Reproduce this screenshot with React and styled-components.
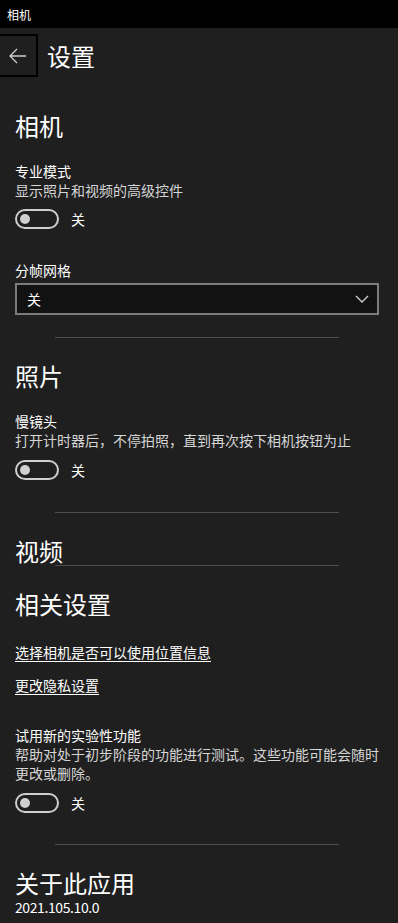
import React, { useState } from "react"
import styled, { createGlobalStyle } from "styled-components"

const GlobalStyle = createGlobalStyle`
  html, body {
    margin: 0;
    padding: 0;
    background: #1f1f1f;
  }
  * {
    box-sizing: border-box;
  }
`

const font = `"Noto Sans CJK SC", "Noto Sans", sans-serif`

const Page = styled.div`
  width: 398px;
  min-height: 923px;
  background: #1f1f1f;
  color: #fff;
  font-family: ${font};
  overflow: hidden;
`

const TitleBar = styled.div`
  height: 28px;
  background: #000;
  display: flex;
  align-items: center;
  padding-left: 7px;
  font-size: 12px;
  color: #fff;
`

const Header = styled.header`
  display: flex;
  align-items: center;
  margin-top: 6px;
  height: 43px;
`

const BackButton = styled.button`
  width: 38px;
  height: 43px;
  border: 2px solid #000;
  border-left: none;
  background: transparent;
  display: flex;
  align-items: center;
  justify-content: center;
  padding: 0;
  margin: 0;
  color: #d0d0d0;
`

const PageTitle = styled.h1`
  margin: 0 0 0 9px;
  font-size: 24px;
  font-weight: 400;
  line-height: 28px;
`

const Content = styled.main`
  padding: 0 19px 0 15px;
`

const Heading = styled.h2`
  margin: ${(p) => p.$top}px 0 0;
  font-size: 24px;
  font-weight: 400;
  line-height: 28px;
`

const Label = styled.div`
  margin-top: ${(p) => p.$top || 0}px;
  font-size: 14px;
  line-height: 19px;
  color: #fff;
`

const Description = styled.div`
  font-size: 14px;
  line-height: 19px;
  color: #d6d6d6;
`

const Version = styled.div`
  margin-top: 2px;
  font-size: 14px;
  line-height: 17px;
  letter-spacing: -0.4px;
  color: #fff;
`

const ToggleRow = styled.div`
  display: flex;
  align-items: center;
  gap: 12px;
  margin-top: ${(p) => p.$top || 10}px;
  height: 20px;
  font-size: 14px;
`

const Track = styled.button`
  width: 44px;
  height: 20px;
  border-radius: 10px;
  border: 2px solid #cfcfcf;
  background: transparent;
  padding: 0;
  position: relative;
  cursor: pointer;
`

const Knob = styled.span`
  position: absolute;
  top: 3px;
  left: ${(p) => (p.$on ? 27 : 3)}px;
  width: 10px;
  height: 10px;
  border-radius: 50%;
  background: #d0d0d0;
`

const Select = styled.div`
  margin-top: 3px;
  height: 32px;
  border: 2px solid #7c7c7c;
  background: #121212;
  display: flex;
  align-items: center;
  justify-content: space-between;
  padding: 0 8px 0 10px;
  font-size: 14px;
`

const Divider = styled.hr`
  margin: ${(p) => p.$top}px 40px 0;
  border: none;
  height: 1px;
  background: #4f4f4f;
`

const LinkText = styled.a`
  display: inline-block;
  margin-top: ${(p) => p.$top}px;
  font-size: 14px;
  line-height: 19px;
  color: #fff;
  text-decoration: underline;
  text-underline-offset: 3px;
`

const LinkRow = styled.div``

const Toggle = ({ top }) => {
  const [on, setOn] = useState(false)
  return (
    <ToggleRow $top={top}>
      <Track onClick={() => setOn(!on)}>
        <Knob $on={on} />
      </Track>
      <span>{on ? "开" : "关"}</span>
    </ToggleRow>
  )
}

const BackIcon = () => (
  <svg width="18" height="16" viewBox="0 0 18 16" fill="none" stroke="currentColor" strokeWidth="1.3">
    <path d="M1 8h16M8 1L1 8l7 7" />
  </svg>
)

const Chevron = () => (
  <svg width="14" height="8" viewBox="0 0 14 8" fill="none" stroke="#cfcfcf" strokeWidth="1.3">
    <path d="M1 1l6 6 6-6" />
  </svg>
)

const App = () => (
  <Page>
    <GlobalStyle />
    <TitleBar>相机</TitleBar>
    <Header>
      <BackButton aria-label="返回">
        <BackIcon />
      </BackButton>
      <PageTitle>设置</PageTitle>
    </Header>
    <Content>
      <Heading $top={35}>相机</Heading>
      <Label $top={22}>专业模式</Label>
      <Description>显示照片和视频的高级控件</Description>
      <Toggle top={9} />
      <Label $top={32}>分帧网格</Label>
      <Select>
        <span>关</span>
        <Chevron />
      </Select>
      <Divider $top={22} />
      <Heading $top={24}>照片</Heading>
      <Label $top={22}>慢镜头</Label>
      <Description>打开计时器后，不停拍照，直到再次按下相机按钮为止</Description>
      <Toggle top={10} />
      <Divider $top={32} />
      <Heading $top={24}>视频</Heading>
      <Divider $top={0} />
      <Heading $top={24}>相关设置</Heading>
      <LinkRow>
        <LinkText $top={25}>选择相机是否可以使用位置信息</LinkText>
      </LinkRow>
      <LinkRow>
        <LinkText $top={13}>更改隐私设置</LinkText>
      </LinkRow>
      <Label $top={30}>试用新的实验性功能</Label>
      <Description>帮助对处于初步阶段的功能进行测试。这些功能可能会随时更改或删除。</Description>
      <Toggle top={10} />
      <Divider $top={31} />
      <Heading $top={24}>关于此应用</Heading>
      <Version>2021.105.10.0</Version>
    </Content>
  </Page>
)

export default App
